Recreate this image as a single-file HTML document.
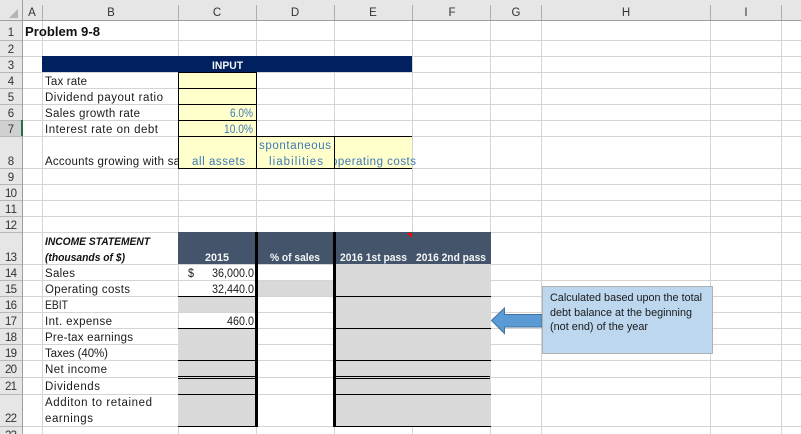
<!DOCTYPE html>
<html><head><meta charset="utf-8"><title>Problem 9-8</title>
<style>
html,body{margin:0;padding:0;background:#fff;width:801px;height:434px;overflow:hidden}
svg{display:block}
text{font-family:"Liberation Sans",sans-serif;font-size:11.5px;fill:#1a1a1a}
.h{font-size:11.5px;fill:#333;text-anchor:middle}
.b{fill:#3f78b8}
.w{fill:#f4f6f8;font-weight:bold;font-size:11px}
</style></head><body>
<svg width="801" height="434" viewBox="0 0 801 434" xmlns="http://www.w3.org/2000/svg">
<defs><clipPath id="e8"><rect x="335" y="136" width="90" height="32"/></clipPath><clipPath id="b8"><rect x="43" y="136" width="135" height="32"/></clipPath></defs>
<!-- headers -->
<rect x="0" y="0" width="801" height="20" fill="#e6e6e6"/>
<rect x="0" y="0" width="22" height="434" fill="#e6e6e6"/>
<rect x="0" y="120" width="22" height="16" fill="#d0d0d0"/>
<path d="M18 9V18H9Z" fill="#b4b4b4"/>
<!-- gridlines -->
<g shape-rendering="crispEdges" fill="none">
<path stroke="#d4d4d4" d="M42.5 20V434M178.500 20V434M256.500 20V434M334.500 20V434M412.500 20V434M490.500 20V434M541.500 20V434M710.500 20V434M781.500 20V434
M22 40.500H801M22 56.500H801M22 72.500H801M22 88.500H801M22 104.500H801M22 120.500H801M22 136.500H801M22 168.500H801M22 184.500H801M22 200.500H801M22 216.500H801M22 232.500H801M22 264.500H801M22 280.500H801M22 296.500H801M22 312.500H801M22 328.500H801M22 344.500H801M22 360.500H801M22 377.500H801M22 394.500H801M22 426.500H801"/>
<path stroke="#b8b8b8" d="M0 40.500H22M0 56.500H22M0 72.500H22M0 88.500H22M0 104.500H22M0 120.500H22M0 136.500H22M0 168.500H22M0 184.500H22M0 200.500H22M0 216.500H22M0 232.500H22M0 264.500H22M0 280.500H22M0 296.500H22M0 312.500H22M0 328.500H22M0 344.500H22M0 360.500H22M0 377.500H22M0 394.500H22M0 426.500H22"/>
<path stroke="#adadad" d="M42.500 5V20M178.500 5V20M256.500 5V20M334.500 5V20M412.500 5V20M490.500 5V20M541.500 5V20M710.500 5V20M781.500 5V20"/>
<path stroke="#9f9f9f" d="M0 20.500H801M22.500 0V434"/>
</g>
<rect x="21" y="120" width="2" height="16" fill="#217346" shape-rendering="crispEdges"/>
<!-- fills -->
<g shape-rendering="crispEdges">
<rect x="42" y="56" width="370" height="16" fill="#002060"/>
<rect x="179" y="73" width="77" height="95" fill="#ffffcc"/>
<rect x="257" y="137" width="155" height="31" fill="#ffffcc"/>
<rect x="178" y="232" width="313" height="32" fill="#44546a"/>
<rect x="178" y="297" width="77" height="15" fill="#d9d9d9"/>
<rect x="178" y="329" width="77" height="97" fill="#d9d9d9"/>
<rect x="258" y="281" width="75" height="15" fill="#d9d9d9"/>
<rect x="336" y="264" width="155" height="162" fill="#d9d9d9"/>
</g>
<!-- borders -->
<g shape-rendering="crispEdges" fill="none" stroke="#000">
<path d="M178.500 72V168M256.500 72V168M334.500 136V168M178 72.500H257M178 88.500H257M178 104.500H257M178 120.500H257M178 136.500H412M178 168.500H412"/>
<path d="M178 296.500H255M178 328.500H255M178 360.500H255M178 376.500H255M178 378.500H255M178 394.500H255M178 426.500H255"/>
<path d="M336 296.500H491M336 328.500H491M336 360.500H491M336 376.500H490M336 378.500H490M336 394.500H491M336 426.500H491"/>
</g>
<rect x="255" y="232" width="3" height="195" fill="#000" shape-rendering="crispEdges"/>
<rect x="333" y="232" width="3" height="195" fill="#000" shape-rendering="crispEdges"/>
<path d="M407 233H412V238Z" fill="#f00"/>
<!-- column letters -->
<text class="h" x="32" y="16">A</text><text class="h" x="111" y="16">B</text><text class="h" x="217" y="16">C</text><text class="h" x="295" y="16">D</text><text class="h" x="373" y="16">E</text><text class="h" x="452" y="16">F</text><text class="h" x="516" y="16">G</text><text class="h" x="626" y="16">H</text><text class="h" x="746" y="16">I</text>
<!-- row numbers -->
<text class="h" x="11" y="36">1</text><text class="h" x="11" y="53">2</text><text class="h" x="11" y="69">3</text><text class="h" x="11" y="85">4</text><text class="h" x="11" y="101">5</text><text class="h" x="11" y="117">6</text><text class="h" x="11" y="133">7</text><text class="h" x="11" y="165">8</text><text class="h" x="11" y="181">9</text><text class="h" x="11" y="197" textLength="12">10</text><text class="h" x="11" y="213" textLength="12">11</text><text class="h" x="11" y="229" textLength="12">12</text><text class="h" x="11" y="261" textLength="12">13</text><text class="h" x="11" y="277" textLength="12">14</text><text class="h" x="11" y="293" textLength="12">15</text><text class="h" x="11" y="309" textLength="12">16</text><text class="h" x="11" y="325" textLength="12">17</text><text class="h" x="11" y="341" textLength="12">18</text><text class="h" x="11" y="357" textLength="12">19</text><text class="h" x="11" y="373" textLength="12">20</text><text class="h" x="11" y="390" textLength="12">21</text><text class="h" x="11" y="422" textLength="12">22</text><text class="h" x="11" y="439" textLength="12">23</text>
<!-- labels -->
<text x="25" y="36" textLength="75" lengthAdjust="spacingAndGlyphs" style="font-size:13px;font-weight:bold;fill:#111">Problem 9-8</text>
<text class="w" x="212" y="69" textLength="31" lengthAdjust="spacingAndGlyphs">INPUT</text>
<text x="45" y="85" textLength="42">Tax rate</text>
<text x="45" y="101" textLength="118">Dividend payout ratio</text>
<text x="45" y="117" textLength="95">Sales growth rate</text>
<text x="45" y="133" textLength="113">Interest rate on debt</text>
<text x="45" y="165" textLength="135" clip-path="url(#b8)">Accounts growing with sa</text>
<text class="b" x="230" y="117" textLength="23" lengthAdjust="spacingAndGlyphs">6.0%</text>
<text class="b" x="224" y="133" textLength="29" lengthAdjust="spacingAndGlyphs">10.0%</text>
<text class="b" x="192" y="165" textLength="53">all assets</text>
<text class="b" x="259" y="149" textLength="72">spontaneous</text>
<text class="b" x="269" y="165" textLength="54">liabilities</text>
<text class="b" x="331" y="165" textLength="85" clip-path="url(#e8)">operating costs</text>
<text x="45" y="245" textLength="105" lengthAdjust="spacingAndGlyphs" style="font-weight:bold;font-style:italic;font-size:11px;fill:#111">INCOME STATEMENT</text>
<text x="45" y="261" textLength="80" lengthAdjust="spacingAndGlyphs" style="font-weight:bold;font-style:italic;font-size:11px;fill:#111">(thousands of $)</text>
<text x="45" y="277" textLength="30">Sales</text>
<text x="45" y="293" textLength="85">Operating costs</text>
<text x="45" y="309" textLength="23" lengthAdjust="spacingAndGlyphs">EBIT</text>
<text x="45" y="325" textLength="67">Int. expense</text>
<text x="45" y="341" textLength="88">Pre-tax earnings</text>
<text x="45" y="357" textLength="63">Taxes (40%)</text>
<text x="45" y="373" textLength="62">Net income</text>
<text x="45" y="390" textLength="55">Dividends</text>
<text x="45" y="406" textLength="107">Additon to retained</text>
<text x="45" y="422" textLength="48">earnings</text>
<text class="w" x="205" y="261" textLength="24" lengthAdjust="spacingAndGlyphs">2015</text>
<text class="w" x="270" y="261" textLength="50" lengthAdjust="spacingAndGlyphs">% of sales</text>
<text class="w" x="340" y="261" textLength="67" lengthAdjust="spacingAndGlyphs">2016 1st pass</text>
<text class="w" x="416" y="261" textLength="70" lengthAdjust="spacingAndGlyphs">2016 2nd pass</text>
<text x="188" y="277" textLength="6" lengthAdjust="spacingAndGlyphs">$</text>
<text x="212" y="277" textLength="42" lengthAdjust="spacingAndGlyphs">36,000.0</text>
<text x="212" y="293" textLength="42" lengthAdjust="spacingAndGlyphs">32,440.0</text>
<text x="227" y="325" textLength="27" lengthAdjust="spacingAndGlyphs">460.0</text>
<!-- arrow -->
<path d="M491.500 320.500L504.500 308V314.500H542V327H504.500V333.500Z" fill="#5b9bd5" stroke="#41719c"/>
<!-- callout -->
<rect x="542.500" y="286.500" width="170" height="67" fill="#bdd7ee" stroke="#b0b0b0"/>
<text x="550" y="301" textLength="152" lengthAdjust="spacingAndGlyphs" style="font-size:11px">Calculated based upon the total</text>
<text x="550" y="316" textLength="142" lengthAdjust="spacingAndGlyphs" style="font-size:11px">debt balance at the beginning</text>
<text x="550" y="330" textLength="98" lengthAdjust="spacingAndGlyphs" style="font-size:11px">(not end) of the year</text>
</svg>
</body></html>
